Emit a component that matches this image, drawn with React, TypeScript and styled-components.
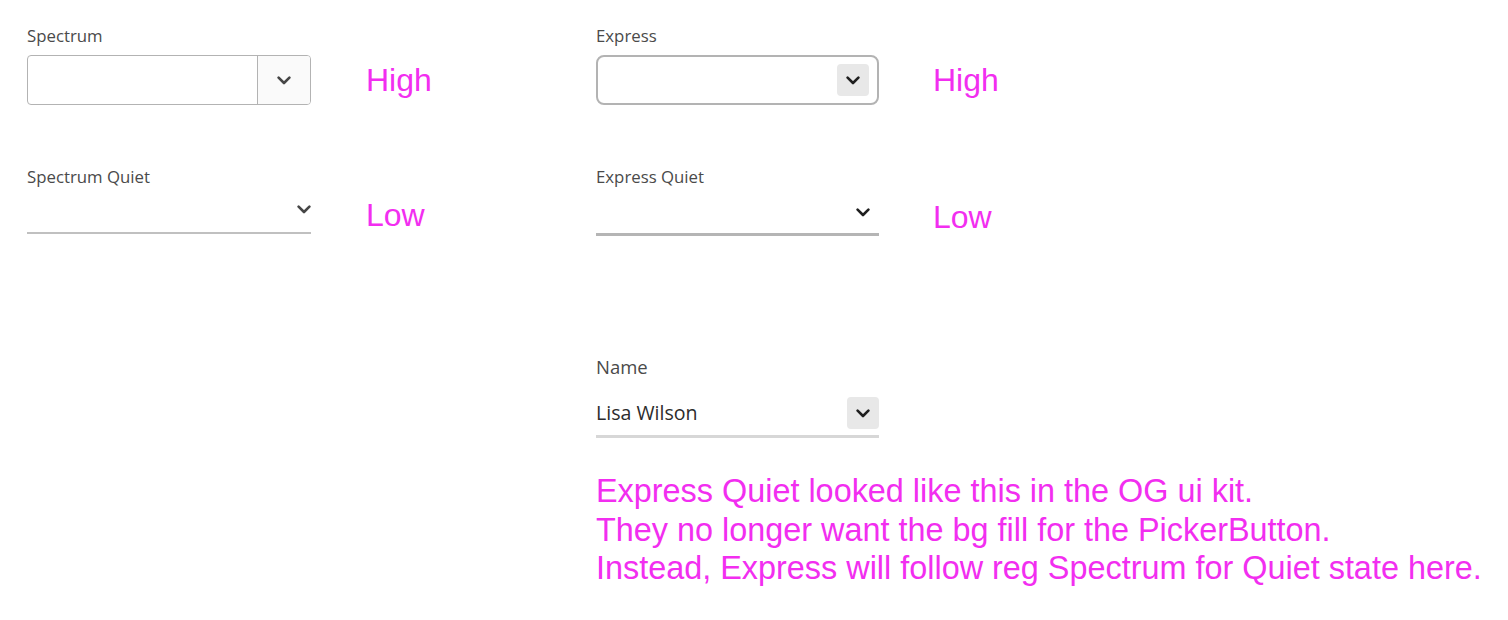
import React from 'react';
import styled, { createGlobalStyle } from 'styled-components';

const GlobalStyle = createGlobalStyle`
  html, body {
    margin: 0;
    padding: 0;
    background: #ffffff;
  }
  body {
    font-family: 'Open Sans', 'Noto Sans', sans-serif;
  }
`;

const Page = styled.div`
  display: grid;
  grid-template-columns: 569px 1fr;
  padding: 26px 0 0 27px;
  width: 1508px;
  height: 620px;
  box-sizing: border-box;
`;

const Column = styled.div`
  display: flex;
  flex-direction: column;
  align-items: flex-start;
`;

const Field = styled.div<{ $gap?: number }>`
  display: flex;
  flex-direction: column;
  margin-top: ${(p) => p.$gap ?? 0}px;
`;

const Label = styled.div<{ $large?: boolean }>`
  font-family: 'Open Sans', 'Noto Sans', sans-serif;
  font-size: ${(p) => (p.$large ? '18.5px' : '16.8px')};
  line-height: ${(p) => (p.$large ? '22px' : '20px')};
  color: #4a4a4a;
  white-space: nowrap;
`;

const ControlRow = styled.div<{ $align: 'center' | 'flex-end'; $top: number }>`
  display: flex;
  align-items: ${(p) => p.$align};
  margin-top: ${(p) => p.$top}px;
`;

const Note = styled.span<{ $offset: number }>`
  font-family: 'Liberation Sans', Arial, Helvetica, sans-serif;
  font-size: 32px;
  line-height: 38.4px;
  color: #f22ef0;
  margin-left: ${(p) => p.$offset}px;
  white-space: nowrap;
`;

const SpectrumPicker = styled.div`
  display: flex;
  width: 284px;
  height: 50px;
  box-sizing: border-box;
  border: 1px solid #b3b3b3;
  border-radius: 4px;
  overflow: hidden;
  background: #ffffff;
`;

const SpectrumInput = styled.div`
  flex: 1;
`;

const SpectrumButton = styled.div`
  width: 53px;
  box-sizing: border-box;
  border-left: 1px solid #b3b3b3;
  background: #fafafa;
  display: flex;
  align-items: center;
  justify-content: center;
`;

const ExpressPicker = styled.div`
  display: flex;
  align-items: center;
  justify-content: flex-end;
  width: 283px;
  height: 50px;
  box-sizing: border-box;
  border: 2px solid #b3b3b3;
  border-radius: 8px;
  padding-right: 8px;
  background: #ffffff;
`;

const QuietPicker = styled.div<{ $express?: boolean }>`
  display: flex;
  align-items: center;
  justify-content: flex-end;
  width: ${(p) => (p.$express ? '283px' : '284px')};
  height: ${(p) => (p.$express ? '49px' : '47px')};
  box-sizing: border-box;
  padding-top: ${(p) => (p.$express ? '4px' : '0')};
  border-bottom: ${(p) => (p.$express ? '3px solid #b5b5b5' : '2px solid #c0c0c0')};
`;

const NamePicker = styled.div`
  display: flex;
  align-items: center;
  width: 283px;
  box-sizing: border-box;
  padding: 19px 0 6px;
  border-bottom: 3px solid #d7d7d7;
`;

const Value = styled.div`
  flex: 1;
  font-family: 'Open Sans', 'Noto Sans', sans-serif;
  font-size: 19.6px;
  line-height: 32px;
  color: #2c2c2c;
`;

const PickerButton = styled.div<{ $filled?: boolean }>`
  width: 32px;
  height: 32px;
  border-radius: 4px;
  background: ${(p) => (p.$filled ? '#e8e8e8' : 'transparent')};
  display: flex;
  align-items: center;
  justify-content: center;
`;

const ChevronSvg = styled.svg<{ $color: string }>`
  display: block;
  width: 14px;
  height: 9px;
  color: ${(p) => p.$color};
`;

const Paragraph = styled.p`
  margin: 34px 0 0 0;
  font-family: 'Liberation Sans', Arial, Helvetica, sans-serif;
  font-size: 32.4px;
  line-height: 38.5px;
  color: #f22ef0;
  white-space: nowrap;
`;

const Chevron = ({ color }: { color: string }) => (
  <ChevronSvg $color={color} viewBox="0 0 14 9" aria-hidden="true">
    <path
      d="M1.6 1.6 L7 7 L12.4 1.6"
      fill="none"
      stroke="currentColor"
      strokeWidth="2.6"
      strokeLinecap="round"
      strokeLinejoin="round"
    />
  </ChevronSvg>
);

export default function App() {
  return (
    <>
      <GlobalStyle />
      <Page>
        <Column>
          <Field>
            <Label>Spectrum</Label>
            <ControlRow $align="center" $top={9}>
              <SpectrumPicker>
                <SpectrumInput />
                <SpectrumButton>
                  <Chevron color="#464646" />
                </SpectrumButton>
              </SpectrumPicker>
              <Note $offset={55}>High</Note>
            </ControlRow>
          </Field>
          <Field $gap={62}>
            <Label>Spectrum Quiet</Label>
            <ControlRow $align="flex-end" $top={0}>
              <QuietPicker>
                <Chevron color="#464646" />
              </QuietPicker>
              <Note $offset={55}>Low</Note>
            </ControlRow>
          </Field>
        </Column>
        <Column>
          <Field>
            <Label>Express</Label>
            <ControlRow $align="center" $top={9}>
              <ExpressPicker>
                <PickerButton $filled>
                  <Chevron color="#1f1f1f" />
                </PickerButton>
              </ExpressPicker>
              <Note $offset={54}>High</Note>
            </ControlRow>
          </Field>
          <Field $gap={62}>
            <Label>Express Quiet</Label>
            <ControlRow $align="flex-end" $top={0}>
              <QuietPicker $express>
                <PickerButton>
                  <Chevron color="#1f1f1f" />
                </PickerButton>
              </QuietPicker>
              <Note $offset={54}>Low</Note>
            </ControlRow>
          </Field>
          <Field $gap={120}>
            <Label $large>Name</Label>
            <NamePicker>
              <Value>Lisa Wilson</Value>
              <PickerButton $filled>
                <Chevron color="#1f1f1f" />
              </PickerButton>
            </NamePicker>
          </Field>
          <Paragraph>
            Express Quiet looked like this in the OG ui kit.
            <br />
            They no longer want the bg fill for the PickerButton.
            <br />
            Instead, Express will follow reg Spectrum for Quiet state here.
          </Paragraph>
        </Column>
      </Page>
    </>
  );
}
